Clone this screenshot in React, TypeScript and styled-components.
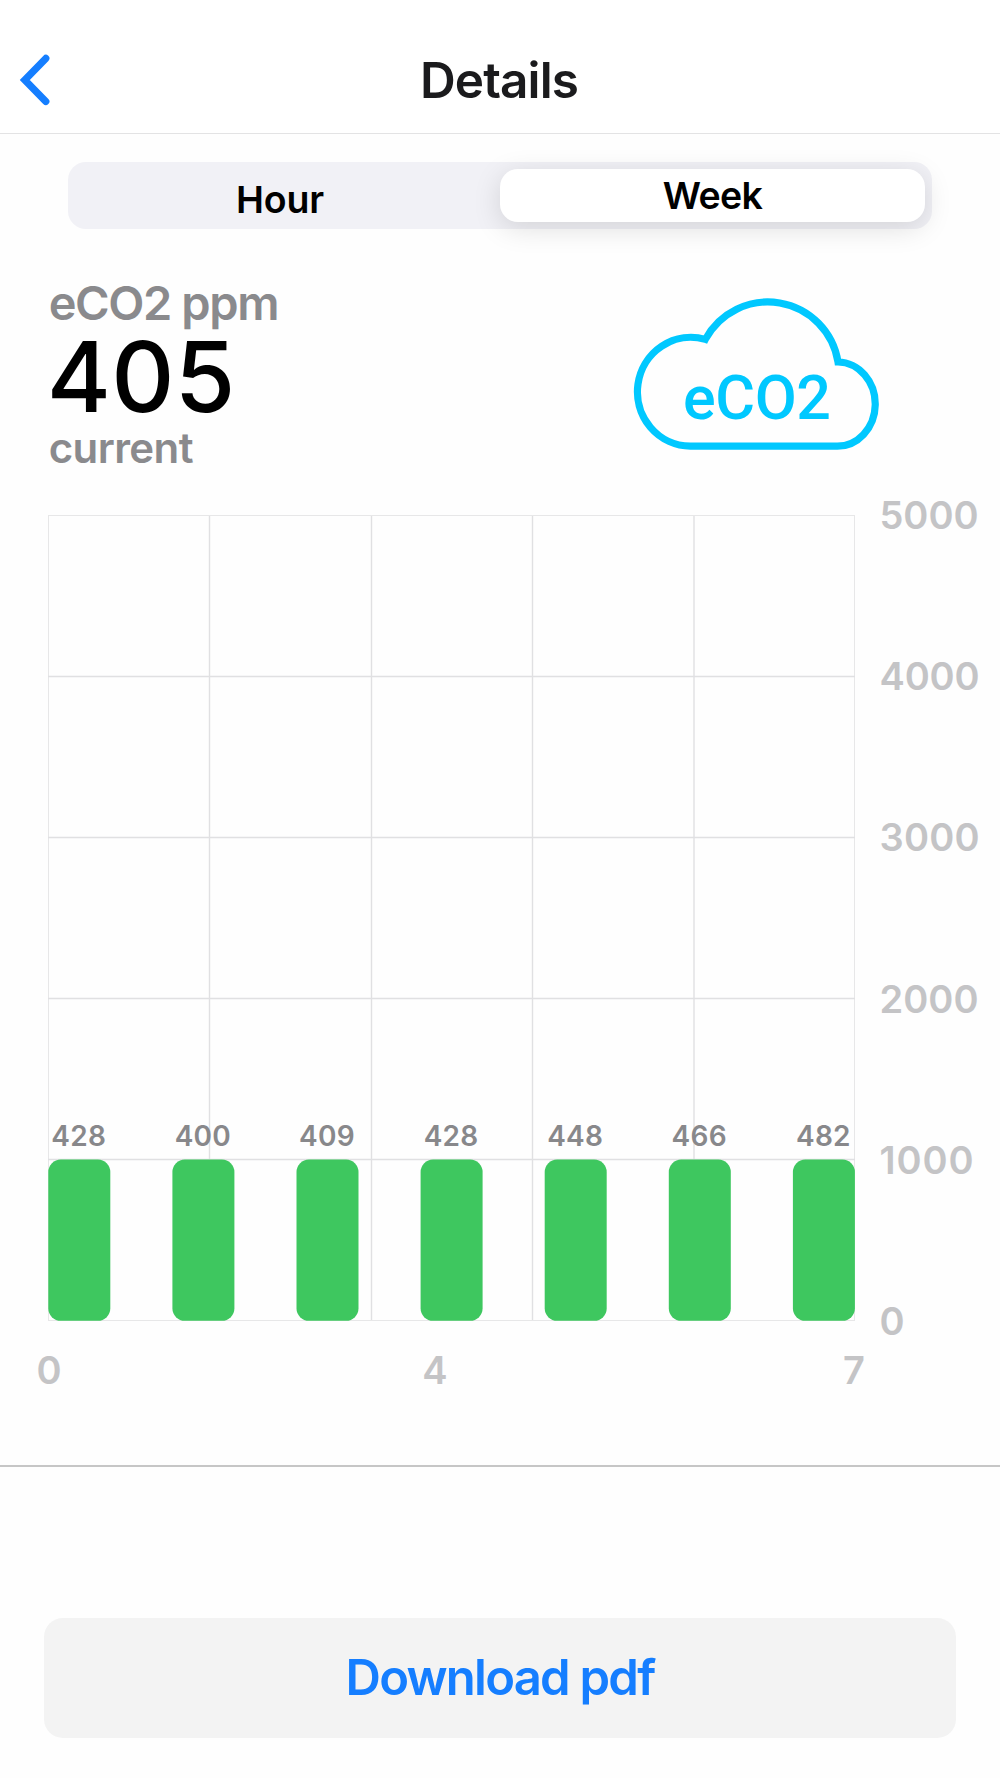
import React from "react";
import styled, { createGlobalStyle } from "styled-components";

const GlobalStyle = createGlobalStyle`
  *, *::before, *::after { box-sizing: border-box; }
  body { margin: 0; background: #fefefe; }
  button { border: 0; padding: 0; background: none; font: inherit; cursor: pointer; }
`;

const Screen = styled.main`
  display: flex;
  flex-direction: column;
  width: 1000px;
  height: 1778px;
  overflow: hidden;
  background: #fefefe;
  color: #000;
  font-family: Inter, "Liberation Sans", sans-serif;
`;

const Header = styled.header`
  display: grid;
  grid-template-columns: 100px 1fr 100px;
  align-items: center;
  height: 134px;
  padding-top: 26px;
  border-bottom: 1px solid #e3e3e4;
  background: #fff;
`;

const BackButton = styled.button`
  display: flex;
  justify-content: flex-start;
  padding-left: 16px;
`;

const Title = styled.h1`
  margin: 0;
  padding-right: 2px;
  text-align: center;
  font-size: 49.5px;
  line-height: 60px;
  font-weight: 600;
  letter-spacing: -0.9px;
  color: #1b1b1d;
`;

const Segments = styled.div`
  display: grid;
  grid-template-columns: 432px 425px;
  align-items: center;
  flex: none;
  width: 864px;
  height: 67px;
  margin: 28px 0 0 68px;
  border-radius: 18px;
  background: #f1f1f6;
`;

const Segment = styled.button<{ $active?: boolean }>`
  height: 53px;
  padding-top: ${(p) => (p.$active ? 0 : 8)}px;
  padding-right: ${(p) => (p.$active ? 0 : 8)}px;
  border-radius: 18px;
  background: ${(p) => (p.$active ? "#fff" : "transparent")};
  box-shadow: ${(p) => (p.$active ? "0 6px 28px rgba(0, 0, 0, 0.13)" : "none")};
  font-size: 37.5px;
  line-height: 45px;
  font-weight: 600;
  letter-spacing: ${(p) => (p.$active ? -0.7 : -0.2)}px;
`;

const Summary = styled.section`
  display: flex;
  justify-content: space-between;
  flex: none;
  height: 252px;
  padding: 47px 120px 0 48.7px;
`;

const Reading = styled.div`
  display: flex;
  flex-direction: column;
`;

const Metric = styled.span`
  font-size: 47px;
  line-height: 54px;
  font-weight: 600;
  letter-spacing: -1.4px;
  color: #8a8a8d;
`;

const Value = styled.strong`
  margin-left: -2px;
  font-size: 98px;
  line-height: 94px;
  font-weight: 500;
  letter-spacing: 0.3px;
`;

const Caption = styled.span`
  font-size: 42px;
  line-height: 47px;
  font-weight: 600;
  letter-spacing: -0.6px;
  color: #8a8a8d;
`;

const CloudIcon = styled.svg`
  width: 250px;
  height: 160px;
  margin-top: 13px;
  overflow: visible;
`;

const CloudLabel = styled.text`
  font-family: Roboto, sans-serif;
  font-size: 61px;
  font-weight: 500;
  fill: #00c8ff;
`;

const Chart = styled.svg`
  display: block;
  flex: none;
  width: 1000px;
  height: 984px;
`;

const Tick = styled.text`
  font-size: 38px;
  font-weight: 570;
  fill: #c4c4c6;
`;

const BarLabel = styled.text`
  font-size: 28px;
  font-weight: 600;
  letter-spacing: 0.3px;
  fill: #88888b;
`;

const Footer = styled.footer`
  display: flex;
  flex: 1;
  justify-content: center;
  align-items: flex-start;
  padding-top: 151px;
  border-top: 2px solid #c6c6c6;
`;

const Download = styled.button`
  width: 912px;
  height: 120px;
  border-radius: 19px;
  background: #f3f3f3;
  color: #157eff;
  font-size: 49px;
  line-height: 60px;
  font-weight: 600;
  letter-spacing: -1.75px;
`;

const values = [428, 400, 409, 428, 448, 466, 482];
const columns = [48.5, 209.5, 371.5, 532.5, 694, 854.5];
const rows = [
  { label: "5000", y: 34.5, baseline: 47.5, width: 99 },
  { label: "4000", y: 195.5, baseline: 208.8, width: 100 },
  { label: "3000", y: 356.5, baseline: 370.3, width: 100 },
  { label: "2000", y: 517.5, baseline: 531.8, width: 99 },
  { label: "1000", y: 678.5, baseline: 692.5, width: 94 },
  { label: "0", y: 839.5, baseline: 853.5, width: 24 },
];
const days = [
  { label: "0", x: 49 },
  { label: "4", x: 435 },
  { label: "7", x: 854 },
];

function WeekChart() {
  return (
    <Chart viewBox="0 0 1000 984">
      {columns.map((x, i) => (
        <line key={x} x1={x} x2={x} y1={34} y2={840} stroke={i % 5 ? "#e0e0e2" : "#e7e7e8"} strokeWidth={i % 5 ? 1.4 : 1} />
      ))}
      {rows.map((r, i) => (
        <g key={r.label}>
          <line x1={48} x2={855} y1={r.y} y2={r.y} stroke={i % 5 ? "#e0e0e2" : "#e7e7e8"} strokeWidth={i % 5 ? 1.4 : 1} />
          <Tick x={879.5} y={r.baseline} textLength={r.width}>{r.label}</Tick>
        </g>
      ))}
      {values.map((value, i) => (
        <g key={i}>
          <BarLabel x={78.8 + i * 124.1} y={664.7} textAnchor="middle">{value}</BarLabel>
          <rect x={48.3 + i * 124.1} y={678.5} width={62} height={161.3} rx={12.5} fill="#3ec75f" />
        </g>
      ))}
      {days.map((d) => (
        <Tick key={d.label} x={d.x} y={902.5} textAnchor="middle">{d.label}</Tick>
      ))}
    </Chart>
  );
}

export default function App() {
  return (
    <Screen>
      <GlobalStyle />
      <Header>
        <BackButton aria-label="Back">
          <svg width="38" height="56" viewBox="0 0 38 56" fill="none">
            <path d="M29.8 6.4 8.8 27.9 29.8 49.4" stroke="#157eff" strokeWidth="7.2" strokeLinecap="round" strokeLinejoin="miter" />
          </svg>
        </BackButton>
        <Title>Details</Title>
      </Header>
      <Segments>
        <Segment>Hour</Segment>
        <Segment $active>Week</Segment>
      </Segments>
      <Summary>
        <Reading>
          <Metric>eCO2 ppm</Metric>
          <Value>405</Value>
          <Caption>current</Caption>
        </Reading>
        <CloudIcon viewBox="630 289 250 160" fill="none">
          <path
            d="M690.4 446.2H836.5A38 42.1 0 0 0 838 362A71 71 0 0 0 705.3 339.4A53.5 54.4 0 1 0 690.4 446.2Z"
            stroke="#00c8ff"
            strokeWidth="7.2"
          />
          <CloudLabel x="683" y="418.5" textLength="148">eCO2</CloudLabel>
        </CloudIcon>
      </Summary>
      <WeekChart />
      <Footer>
        <Download>Download pdf</Download>
      </Footer>
    </Screen>
  );
}
